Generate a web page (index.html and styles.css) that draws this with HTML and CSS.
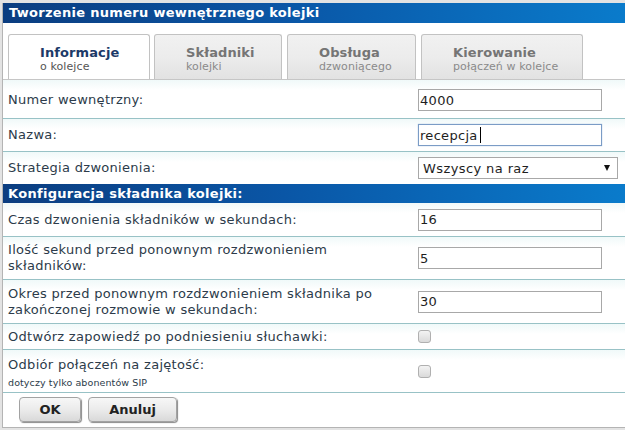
FILE: index.html
```html
<!DOCTYPE html>
<html lang="pl">
<head>
<meta charset="utf-8">
<title>Tworzenie numeru wewnętrznego kolejki</title>
<link rel="stylesheet" href="styles.css">
</head>
<body>
<div class="dialog">
  <div class="titlebar">Tworzenie numeru wewnętrznego kolejki</div>
  <div class="tabs">
    <div class="tab tab-active tab-1"><span class="tab-title">Informacje</span><span class="tab-sub">o kolejce</span></div>
    <div class="tab tab-2"><span class="tab-title">Składniki</span><span class="tab-sub">kolejki</span></div>
    <div class="tab tab-3"><span class="tab-title">Obsługa</span><span class="tab-sub">dzwoniącego</span></div>
    <div class="tab tab-4"><span class="tab-title">Kierowanie</span><span class="tab-sub">połączeń w kolejce</span></div>
  </div>
  <div class="form">
    <div class="row row-first">
      <label class="label">Numer wewnętrzny:</label>
      <input class="text" type="text" value="4000">
    </div>
    <div class="row row-32">
      <label class="label">Nazwa:</label>
      <div class="focus-wrap"><input class="text text-focus" type="text" value="recepcja"><span class="caret"></span></div>
    </div>
    <div class="row row-32 row-nolines">
      <label class="label">Strategia dzwonienia:</label>
      <div class="select-wrap">
        <select class="select"><option>Wszyscy na raz</option></select>
      </div>
    </div>
    <div class="section">Konfiguracja składnika kolejki:</div>
    <div class="row row-33">
      <label class="label">Czas dzwonienia składników w sekundach:</label>
      <input class="text" type="text" value="16">
    </div>
    <div class="row row-42">
      <label class="label">Ilość sekund przed ponownym rozdzwonieniem składników:</label>
      <input class="text" type="text" value="5">
    </div>
    <div class="row row-43">
      <label class="label">Okres przed ponownym rozdzwonieniem składnika po zakończonej rozmowie w sekundach:</label>
      <input class="text" type="text" value="30">
    </div>
    <div class="row row-25">
      <label class="label">Odtwórz zapowiedź po podniesieniu słuchawki:</label>
      <input class="check" type="checkbox">
    </div>
    <div class="row row-42 row-check2">
      <label class="label">Odbiór połączeń na zajętość:<span class="hint">dotyczy tylko abonentów SIP</span></label>
      <input class="check" type="checkbox">
    </div>
  </div>
  <div class="buttons">
    <button class="btn btn-ok" type="button">OK</button>
    <button class="btn btn-cancel" type="button">Anuluj</button>
  </div>
</div>
</body>
</html>
```
FILE: styles.css
```css
* { box-sizing: border-box; }

html, body {
  margin: 0;
  padding: 0;
}

body {
  background: #e3e3e3;
  font-family: "DejaVu Sans", Verdana, sans-serif;
  font-size: 13px;
  letter-spacing: 0.3px;
  color: #2c3b4a;
  padding: 3px 0 0 2px;
  height: 430px;
  overflow: hidden;
}

.dialog {
  background: #fff;
  border-left: 1px solid #b4b4b4;
  border-bottom: 1px solid #b4b4b4;
  height: 425px;
}

.titlebar {
  height: 20px;
  line-height: 20px;
  padding-left: 6px;
  color: #fff;
  font-weight: bold;
  font-size: 13px;
  letter-spacing: 0.3px;
  background: linear-gradient(to right, #0b3d80 0%, #0a56a6 45%, #0a7bcb 100%);
}

.tabs {
  display: flex;
  padding: 11px 0 0 5px;
  border-bottom: 1px solid #c6c6c6;
  height: 57px;
}

.tab {
  height: 45px;
  border: 1px solid #c2c2c2;
  border-bottom: none;
  border-radius: 3px 3px 0 0;
  padding: 10px 0 0 31px;
  display: flex;
  flex-direction: column;
  background: linear-gradient(to bottom, #f1f1f1 0%, #ececec 50%, #e2e2e2 100%);
  margin-right: 5px;
  letter-spacing: 0.1px;
}

.tab-1 { width: 142px; margin-right: 4px; }
.tab-2 { width: 128px; }
.tab-3 { width: 129px; }
.tab-4 { width: 162px; }

.tab-active {
  background: #fff;
}

.tab-title {
  font-weight: bold;
  font-size: 13px;
  line-height: 15px;
  color: #757575;
}

.tab-sub {
  font-size: 11px;
  line-height: 14px;
  color: #8a8a8a;
}

.tab-active .tab-title { color: #1c3a68; }
.tab-active .tab-sub { color: #555; }

.row {
  display: grid;
  grid-template-columns: 410px 1fr;
  align-items: center;
  padding-left: 5px;
  border-bottom: 1px solid #98c2c6;
  background: linear-gradient(to bottom, #f0f9f9 0px, #ffffff 10px);
}

.row-first { height: 39px; padding-top: 2px; }
.row-32 { height: 33px; }
.row-nolines { border-bottom: none; height: 32px; }
.row-33 { height: 34px; }
.row-42 { height: 43px; }
.row-43 { height: 44px; }
.row-25 { height: 26px; }

.label {
  line-height: 16px;
  display: flex;
  flex-direction: column;
  padding-right: 20px;
}

.row-check2 .label { padding-top: 4px; }

.hint {
  font-size: 9.5px;
  line-height: 14px;
  margin-top: 3px;
  letter-spacing: 0.1px;
}

.text {
  width: 184px;
  height: 22px;
  border: 1px solid #a8a8a8;
  padding: 0 1px;
  font-family: "DejaVu Sans", Verdana, sans-serif;
  font-size: 13px;
  letter-spacing: 0.3px;
  color: #1e1e1e;
  background: #fff;
  outline: none;
  margin: 0;
}

.focus-wrap {
  position: relative;
  width: 184px;
}

.text-focus {
  border-color: #7b9cc6;
  box-shadow: 0 0 1px #9bb7da;
}

.caret {
  position: absolute;
  left: 62px;
  top: 3px;
  width: 1px;
  height: 16px;
  background: #000;
}

.select-wrap {
  position: relative;
  width: 200px;
}

.select-wrap::after {
  content: "";
  position: absolute;
  right: 8px;
  top: 8px;
  border-left: 3px solid transparent;
  border-right: 3px solid transparent;
  border-top: 6px solid #111;
}

.select {
  appearance: none;
  -webkit-appearance: none;
  width: 200px;
  height: 22px;
  border: 1px solid #a8a8a8;
  border-radius: 0;
  background: #fff;
  padding: 0 4px;
  font-family: "DejaVu Sans", Verdana, sans-serif;
  font-size: 13px;
  letter-spacing: 0.4px;
  color: #1e1e1e;
  margin: 0;
  outline: none;
}

.section {
  height: 19px;
  line-height: 19px;
  padding-left: 5px;
  color: #fff;
  font-weight: bold;
  font-size: 13px;
  letter-spacing: 0.3px;
  background: linear-gradient(to right, #0b3d80 0%, #0a56a6 45%, #0a7bcb 100%);
}

.check {
  appearance: none;
  -webkit-appearance: none;
  width: 13px;
  height: 13px;
  margin: 0;
  border: 1px solid #b0b0b0;
  border-radius: 3px;
  background: linear-gradient(to bottom, #f3f3f3, #dadada);
}

.buttons {
  display: flex;
  gap: 7px;
  padding: 4px 0 0 16px;
}

.btn {
  height: 25px;
  border: 1px solid #a2a2a2;
  border-radius: 4px;
  background: linear-gradient(to bottom, #f7f7f7 0%, #ebebeb 50%, #d9d9d9 100%);
  box-shadow: 1px 1px 1px #8a8a8a;
  font-family: "DejaVu Sans", Verdana, sans-serif;
  font-weight: bold;
  font-size: 13px;
  color: #222;
  padding: 0;
  margin: 0;
}

.btn-ok { width: 62px; }
.btn-cancel { width: 89px; }
```
